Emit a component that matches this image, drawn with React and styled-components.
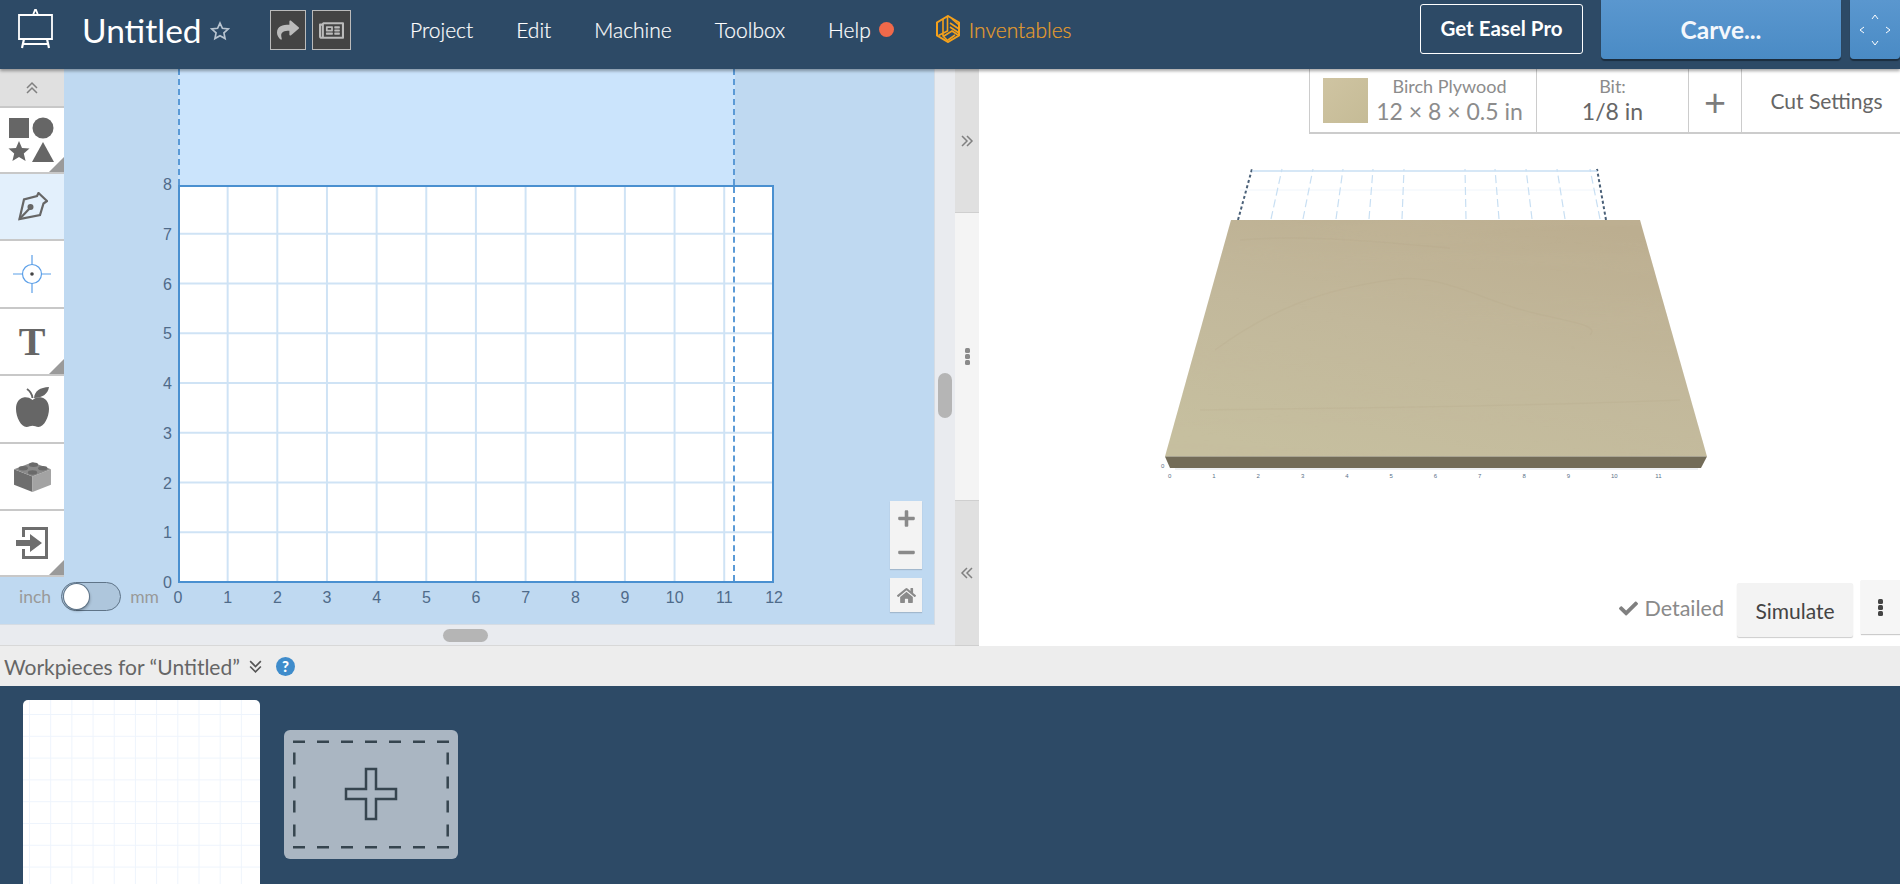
import React from 'react';
import styled, { createGlobalStyle } from 'styled-components';
import { FaShare, FaRegNewspaper, FaHome, FaCheck, FaPlus, FaMinus } from 'react-icons/fa';

const GlobalStyle = createGlobalStyle`
  html, body {
    margin: 0;
    padding: 0;
    height: 100%;
    overflow: hidden;
    background: #2d4a66;
    font-family: Lato, "Open Sans", sans-serif;
  }
  * { box-sizing: border-box; }
`;

const Page = styled.div`
  width: 1900px;
  height: 884px;
  display: flex;
  flex-direction: column;
  overflow: hidden;
`;

/* ---------- header ---------- */
const Header = styled.header`
  position: relative;
  z-index: 5;
  height: 69px;
  flex: none;
  display: flex;
  align-items: flex-start;
  background: #2d4a66;
  box-shadow: 0 2px 3px rgba(0, 0, 0, 0.35);
  color: #fff;
`;

const Logo = styled.div`
  width: 82px;
  height: 60px;
  padding: 8px 0 0 18px;
`;

const Title = styled.div`
  font-size: 33.5px;
  line-height: 60px;
  width: 128px;
  color: #fff;
`;

const Star = styled.div`
  width: 60px;
  padding: 21px 0 0 0;
`;

const ActionGroup = styled.div`
  display: flex;
  gap: 6px;
  padding-top: 10px;
  width: 140px;
`;

const SquareButton = styled.div`
  width: ${(props) => props.$width}px;
  height: 40px;
  background: #444;
  border: 1px solid #bbb;
  color: #bbb;
  display: flex;
  align-items: center;
  justify-content: center;
  font-size: ${(props) => props.$size}px;
`;

const Nav = styled.nav`
  display: flex;
  align-items: center;
  height: 58px;
  width: 1010px;
`;

const NavItem = styled.div`
  font-size: 21px;
  font-weight: 300;
  color: #fff;
  margin-right: ${(props) => props.$gap}px;
  -webkit-text-stroke: 0.2px #fff;
`;

const Dot = styled.span`
  width: 15px;
  height: 15px;
  border-radius: 50%;
  background: #f0694a;
  margin: 0 41px 0 -34px;
`;

const BrandText = styled.span`
  font-size: 21px;
  font-weight: 300;
  color: #e89f2c;
  margin-left: 8px;
  -webkit-text-stroke: 0.2px #e89f2c;
`;

const ProButton = styled.div`
  width: 163px;
  height: 50px;
  margin-top: 4px;
  border: 1px solid #fff;
  border-radius: 3px;
  display: flex;
  align-items: center;
  justify-content: center;
  font-size: 20.5px;
  font-weight: 700;
  padding-bottom: 2px;
`;

const BlueButton = styled.div`
  width: ${(props) => props.$width}px;
  margin-left: ${(props) => props.$left}px;
  height: 59px;
  flex: none;
  background: linear-gradient(#5a97cf, #4a8bc5);
  border-radius: 0 0 4px 4px;
  box-shadow: 0 2px 1px rgba(0, 0, 0, 0.4);
  display: flex;
  align-items: center;
  justify-content: center;
  font-size: 24.5px;
  font-weight: 700;
  color: #f4f8fc;
`;

/* ---------- workspace ---------- */
const Workspace = styled.div`
  height: 577px;
  flex: none;
  display: flex;
  background: #fff;
`;

const CanvasColumn = styled.div`
  position: relative;
  width: 955px;
  flex: none;
  background: #e9ebef;
  border-bottom: 1px solid #d8d8d8;
`;

const Viewport = styled.div`
  width: 935px;
  height: 556px;
  display: flex;
  background: #bfd9f1;
  border-right: 1px solid #d5dce4;
  border-bottom: 1px solid #d5dce4;
`;

const ScrollHandle = styled.div`
  position: absolute;
  background: #b5b5b5;
  border-radius: 8px;
  left: ${(props) => props.$left}px;
  top: ${(props) => props.$top}px;
  width: ${(props) => props.$w}px;
  height: ${(props) => props.$h}px;
`;

const ToolRail = styled.div`
  position: relative;
  width: 64px;
  flex: none;
`;

const Collapse = styled.div`
  height: 37px;
  background: #e0e0e0;
  display: flex;
  align-items: center;
  justify-content: center;
`;

const Tool = styled.div`
  position: relative;
  height: ${(props) => props.$h}px;
  background: ${(props) => (props.$active ? '#e3f0fc' : '#fff')};
  border-top: 2px solid #c8c8c8;
  display: flex;
  align-items: center;
  justify-content: center;
  color: #666;
  ${(props) =>
    props.$more &&
    `&::after {
      content: '';
      position: absolute;
      right: 0;
      bottom: 0;
      border-style: solid;
      border-width: 0 0 15px 15px;
      border-color: transparent transparent #9a9a9a transparent;
    }`}
`;

const ToolEnd = styled.div`
  height: 2px;
  background: #c8c8c8;
`;

const SerifT = styled.span`
  font-family: "Liberation Serif", serif;
  font-weight: 700;
  font-size: 40px;
  line-height: 1;
`;

const UnitToggle = styled.div`
  position: absolute;
  left: 19px;
  top: 513px;
  width: 140px;
  display: flex;
  align-items: center;
  justify-content: space-between;
  color: #999;
  font-size: 17.5px;
`;

const Switch = styled.div`
  position: relative;
  width: 60px;
  height: 29px;
  border-radius: 15px;
  background: #aec6dc;
  border: 1px solid #5f7488;
`;

const Knob = styled.div`
  position: absolute;
  left: 2px;
  top: 1px;
  width: 25px;
  height: 25px;
  border-radius: 50%;
  background: #fff;
  box-shadow: 0 0 0 1px #5f7488, 1px 2px 3px rgba(0, 0, 0, 0.3);
`;

const BoardArea = styled.div`
  position: relative;
  flex: 1;
  padding-left: 114px;
`;

const LightZone = styled.div`
  width: 557px;
  height: 116px;
  background: #cbe4fc;
  border-left: 2px dashed #5b9ad6;
  border-right: 2px dashed #5b9ad6;
`;

const Board = styled.div`
  position: relative;
  width: 596px;
  height: 398px;
  background-color: #fff;
  background-image:
    linear-gradient(to right, #cfe3f5 2px, transparent 2px),
    linear-gradient(to top, #cfe3f5 2px, transparent 2px);
  background-size: calc(596px / 12) calc(398px / 8);
  background-position: -3px -2px;
  background-origin: padding-box;
  border: 2px solid #4a90d0;
`;

const StockEdge = styled.div`
  position: absolute;
  left: 553px;
  top: 0;
  bottom: 0;
  border-left: 2px dashed #5b9ad6;
`;

const AxisLabel = styled.span`
  position: absolute;
  font-family: "Liberation Sans", Arial, sans-serif;
  font-size: 16px;
  line-height: 18px;
  color: #4f6b8a;
`;

const YLabel = styled(AxisLabel)`
  right: calc(100% + 8px);
  bottom: ${(props) => props.$n * 49.75 - 11}px;
`;

const XLabel = styled(AxisLabel)`
  top: calc(100% + 8px);
  left: ${(props) => props.$n * 49.67 - 2}px;
  transform: translateX(-50%);
`;

const ZoomStack = styled.div`
  position: absolute;
  left: 826px;
  top: 432px;
  width: 32px;
  display: flex;
  flex-direction: column;
  gap: 9px;
`;

const ZoomCard = styled.div`
  background: #f3f3f3;
  box-shadow: 0 1px 1px rgba(0, 0, 0, 0.15);
  color: #8a8a8a;
  display: flex;
  flex-direction: column;
  align-items: center;
  justify-content: space-around;
  height: ${(props) => props.$h}px;
  font-size: ${(props) => props.$size}px;
`;

const Divider = styled.div`
  width: 24px;
  flex: none;
  display: flex;
  flex-direction: column;
`;

const DividerPart = styled.div`
  height: ${(props) => props.$h}px;
  background: ${(props) => (props.$light ? '#f4f4f4' : '#e0e0e0')};
  border-bottom: 1px solid #cfcfcf;
  display: flex;
  align-items: ${(props) => props.$align};
  justify-content: center;
  padding: ${(props) => props.$pad || 0};
`;

const DotsV = styled.div`
  display: flex;
  flex-direction: column;
  gap: 1px;
  span {
    width: 5px;
    height: 5px;
    border-radius: 1.5px;
    background: ${(props) => props.$color};
  }
`;

/* ---------- 3d preview ---------- */
const Preview = styled.div`
  flex: 1;
  display: flex;
  flex-direction: column;
  background: #fff;
`;

const MaterialBar = styled.div`
  align-self: flex-end;
  width: 591px;
  height: 65px;
  display: flex;
  border-left: 1px solid #ccc;
  border-bottom: 2px solid #ccc;
  background: #fff;
`;

const BarCell = styled.div`
  width: ${(props) => props.$w}px;
  flex: none;
  display: flex;
  align-items: center;
  justify-content: center;
  padding-left: ${(props) => props.$pad || 0}px;
  border-right: ${(props) => (props.$last ? 'none' : '1px solid #ccc')};
`;

const Swatch = styled.div`
  width: 45px;
  height: 45px;
  margin: 0 8px 0 0;
  background: linear-gradient(135deg, #cfc4a2, #c5bb96);
`;

const Stacked = styled.div`
  text-align: center;
  color: #888;
`;

const SmallLine = styled.div`
  font-size: 18px;
  line-height: 21px;
  color: #8c8c8c;
`;

const BigLine = styled.div`
  font-size: 23px;
  line-height: 29px;
  color: ${(props) => (props.$dark ? '#666' : '#8c8c8c')};
`;

const PlusMark = styled.span`
  font-size: 38px;
  line-height: 1;
  color: #7c7c7c;
`;

const CutLabel = styled.span`
  font-size: 21px;
  color: #666;
`;

const Stage = styled.div`
  height: 446px;
  flex: none;
`;

const PreviewFooter = styled.div`
  height: 66px;
  flex: none;
  display: flex;
  justify-content: flex-end;
  align-items: flex-start;
`;

const Status = styled.div`
  display: flex;
  align-items: center;
  gap: 7px;
  height: 56px;
  margin-right: 13px;
  color: #8a8a8a;
  font-size: 21.5px;
  svg { color: #808080; font-size: 19px; }
`;

const Simulate = styled.div`
  width: 116px;
  height: 54px;
  margin-top: 3px;
  background: #f3f3f3;
  border-radius: 2px;
  box-shadow: 0 1px 1px rgba(0, 0, 0, 0.2);
  display: flex;
  align-items: center;
  justify-content: center;
  font-size: 21px;
  color: #444;
`;

const MoreButton = styled.div`
  width: 39px;
  height: 54px;
  margin-left: 8px;
  background: #f6f6f6;
  box-shadow: 0 1px 1px rgba(0, 0, 0, 0.2);
  display: flex;
  align-items: center;
  justify-content: center;
`;

/* ---------- workpieces ---------- */
const WorkBar = styled.div`
  height: 40px;
  flex: none;
  background: #ededed;
  display: flex;
  align-items: center;
  gap: 8px;
  padding-left: 4px;
  font-size: 21px;
  color: #666;
`;

const Help = styled.span`
  width: 19px;
  height: 19px;
  border-radius: 50%;
  background: #3f8ccb;
  color: #fff;
  font-size: 15px;
  font-weight: 900;
  display: flex;
  align-items: center;
  justify-content: center;
  margin-left: 5px;
`;

const Tray = styled.div`
  flex: 1;
  background: #2d4a66;
  display: flex;
  align-items: flex-start;
  gap: 24px;
  padding: 14px 0 0 23px;
`;

const PieceCard = styled.div`
  width: 237px;
  height: 200px;
  background-color: #fff;
  background-image:
    linear-gradient(to right, #eef4fc 1px, transparent 1px),
    linear-gradient(to bottom, #eef4fc 1px, transparent 1px);
  background-size: 21.2px 21.8px;
  background-position: 6px 14px;
  border-radius: 5px 5px 0 0;
`;

const AddCard = styled.div`
  width: 174px;
  height: 129px;
  margin-top: 30px;
  background: #aab6c2;
  border-radius: 6px;
  display: flex;
`;

const Chevrons = ({ dir, color = '#808080', size = 14 }) => {
  const rotate = { up: 0, down: 180, right: 90, left: -90 }[dir];
  return (
    <svg width={size} height={size} viewBox="0 0 14 14" fill="none" stroke={color} strokeWidth="1.5" style={{ transform: `rotate(${rotate}deg)` }}>
      <path d="M2 7l5-5 5 5M2 12l5-5 5 5" />
    </svg>
  );
};

const EaselIcon = () => (
  <svg width="36" height="42" viewBox="0 0 36 42" fill="none" stroke="#fff" strokeWidth="1.8">
    <path d="M1 7h33v24H1z" />
    <path d="M15 7l2-5h1l2 5" />
    <path d="M6 31l-2 9M29 31l2 9M5 36h25" strokeWidth="2.2" />
  </svg>
);

const StarIcon = () => (
  <svg width="20" height="20" viewBox="0 0 24 24" fill="none" stroke="#b8c4d0" strokeWidth="2">
    <path d="M12 2.5l2.9 6.3 6.9.8-5.1 4.7 1.4 6.8-6.1-3.4-6.1 3.4 1.4-6.8-5.1-4.7 6.9-.8z" />
  </svg>
);

const BrandIcon = () => (
  <svg width="26" height="28" viewBox="0 0 26 28" fill="none" stroke="#f5a11b" strokeWidth="2">
    <path d="M13 1l11 6.500v13L13 27 2 20.500v-13z" />
    <path d="M8 4v17l5 5M12.500 2v14l-9 4.500M17 4l7 6M15 8l9 6M15 12l9 6M9 21l8-5 6 4M13 25l7-5" strokeWidth="1.6" />
  </svg>
);

const ShapesIcon = () => (
  <svg width="46" height="46" viewBox="0 0 46 46" fill="#666" style={{ marginLeft: -3 }}>
    <rect x="1" y="1" width="20" height="20" />
    <circle cx="35" cy="11" r="10.500" />
    <path d="M11 24l3 7 7.500.6-5.700 5 1.800 7.400L11 40l-6.600 4 1.800-7.400-5.700-5L8 31z" />
    <path d="M35 25l11 20H24z" />
  </svg>
);

const PenIcon = () => (
  <svg width="30" height="29" viewBox="0 0 30 29" fill="none" stroke="#666" strokeWidth="2.200" style={{ marginLeft: 2 }}>
    <path d="M1.500 27L6 7.500l13-3.500 1.500-3L29 9l-3.500 2.500L22 23z" />
    <path d="M1.500 27L12 16" />
    <circle cx="12.500" cy="15" r="3" fill="#666" stroke="none" />
  </svg>
);

const OriginIcon = () => (
  <svg width="38" height="38" viewBox="0 0 38 38" fill="none" stroke="#5b9fe8" strokeWidth="1.200">
    <circle cx="19" cy="19" r="9.500" />
    <path d="M19 0v9.500M19 28.500V38M0 19h9.500M28.500 19H38" />
    <circle cx="19" cy="19" r="1.800" fill="#444" stroke="none" />
  </svg>
);

const AppleIcon = () => (
  <svg width="33" height="40" viewBox="0 0 33 40" fill="#666" style={{ marginTop: -4 }}>
    <path d="M16.500 13c-3-2.500-6-3-9-2.500C2.500 11.500 0 16 0 22c0 8 5 18 10.500 18 2.500 0 4-1.200 6-1.200s3.500 1.200 6 1.200C28 40 33 30 33 22c0-6-2.500-10.500-7.500-11.500-3-.5-6 0-9 2.500z" />
    <path d="M18 11C18.500 4 24 .5 33 0c-1 7-7 11-15 11z" />
    <path d="M11 2c3 2 5 5 5.500 9" fill="none" stroke="#666" strokeWidth="2" />
  </svg>
);

const BrickIcon = () => (
  <svg width="39" height="31" viewBox="0 0 38 30">
    <path d="M1 8l18 7v15L1 23z" fill="#6e6e6e" />
    <path d="M19 15l18-7v15l-18 7z" fill="#a3a3a3" />
    <path d="M1 8l18-7 18 7-18 7z" fill="#8a8a8a" />
    <g fill="#6a6a6a">
      <ellipse cx="10" cy="7" rx="4.500" ry="2.200" />
      <ellipse cx="20" cy="3.500" rx="4.500" ry="2.200" />
      <ellipse cx="29" cy="7" rx="4.500" ry="2.200" />
      <ellipse cx="19" cy="11" rx="4.500" ry="2.200" />
    </g>
  </svg>
);

const ImportIcon = () => (
  <svg width="32" height="34" viewBox="0 0 32 34" fill="#6e6e6e">
    <path d="M6 1h26v32H6v-10h3v7h20V4H9v7H6z" />
    <path d="M0 14h14V8l12 9-12 9v-6H0z" />
  </svg>
);

const AddSketchIcon = () => (
  <svg width="174" height="129" viewBox="0 0 174 129" fill="none" stroke="#36454f">
    <g strokeWidth="2.500" strokeDasharray="12 12">
      <path d="M9 11.700H165M9 117.300H165" />
      <path d="M10.300 22.600V107M163.700 22.600V107" />
    </g>
    <path d="M82 39h10v20h20v10H92v20H82V69H62V59h20z" strokeWidth="2.500" />
  </svg>
);

const PlywoodIcon = () => (
  <svg width="921" height="446" viewBox="979 134 921 446">
    <defs>
      <linearGradient id="plyTop" x1="0.25" y1="1" x2="0.75" y2="0">
        <stop offset="0" stopColor="#c6bf9f" />
        <stop offset="0.5" stopColor="#c2b89b" />
        <stop offset="1" stopColor="#bcae90" />
      </linearGradient>
      <filter id="grain" x="0" y="0" width="100%" height="100%">
        <feTurbulence type="fractalNoise" baseFrequency="0.003 0.04" numOctaves="3" seed="6" />
        <feColorMatrix values="0 0 0 0 0.55  0 0 0 0 0.48  0 0 0 0 0.33  0.55 0 0 0 -0.22" />
        <feComposite in2="SourceAlpha" operator="in" />
      </filter>
    </defs>
    <path d="M1238 220L1252 169M1606 220L1597 169" stroke="#4a6078" strokeWidth="2" strokeDasharray="3 2.500" />
    <path d="M1252 171H1597" stroke="#c8dff3" strokeWidth="1.500" />
    <path d="M1240 190H1600" stroke="#f0f5fb" strokeWidth="1" />
    <g stroke="#c8dff3" strokeWidth="1.200" strokeDasharray="8 4">
      <path d="M1271 219L1282 169M1303 219L1313 169M1336 219L1343 169M1369 219L1373 169M1402 219L1404 169" />
      <path d="M1466 219L1465 169M1499 219L1495 169M1532 219L1526 169M1565 219L1557 169M1600 219L1590 169" />
    </g>
    <path d="M1231 220H1640L1707 456.500H1165Z" fill="url(#plyTop)" />
    <path d="M1231 220H1640L1707 456.500H1165Z" filter="url(#grain)" />
    <g fill="none" stroke="#b4a687" strokeWidth="1.500" opacity="0.2">
      <path d="M1215 350C1270 310 1320 290 1390 280C1440 272 1480 300 1530 312C1570 322 1600 325 1590 335" />
      <path d="M1200 410C1320 408 1480 408 1680 400" />
      <path d="M1240 240C1300 235 1360 240 1450 248" />
    </g>
    <path d="M1165 456.500H1707L1701 468H1170Z" fill="#736c58" />
    <path d="M1175 469H1698" stroke="#dfe3e8" strokeWidth="1" />
    <g fontFamily="Liberation Sans, sans-serif" fontSize="6" fill="#5a7088">
      <text x="1161" y="468">0</text>
      {[0, 1, 2, 3, 4, 5, 6, 7, 8, 9, 10, 11].map((n) => (
        <text key={n} x={1168 + n * 44.3} y="478">{n}</text>
      ))}
    </g>
  </svg>
);

const Y_TICKS = [0, 1, 2, 3, 4, 5, 6, 7, 8];
const X_TICKS = [0, 1, 2, 3, 4, 5, 6, 7, 8, 9, 10, 11, 12];

export default function App() {
  return (
    <Page>
      <GlobalStyle />
      <Header>
        <Logo><EaselIcon /></Logo>
        <Title>Untitled</Title>
        <Star><StarIcon /></Star>
        <ActionGroup>
          <SquareButton $width={36} $size={22}><FaShare /></SquareButton>
          <SquareButton $width={39} $size={25}><FaRegNewspaper /></SquareButton>
        </ActionGroup>
        <Nav>
          <NavItem $gap={43}>Project</NavItem>
          <NavItem $gap={43}>Edit</NavItem>
          <NavItem $gap={43}>Machine</NavItem>
          <NavItem $gap={43}>Toolbox</NavItem>
          <NavItem $gap={42}>Help</NavItem>
          <Dot />
          <BrandIcon />
          <BrandText>Inventables</BrandText>
        </Nav>
        <ProButton>Get Easel Pro</ProButton>
        <BlueButton $width={240} $left={18}>Carve...</BlueButton>
        <BlueButton $width={50} $left={9}>
          <svg width="32" height="34" viewBox="0 0 32 34" fill="none" stroke="#fff" strokeWidth="1">
            <path d="M13 6l3-4 3 4M13 28l3 4 3-4M5 14l-4 3 4 3M27 14l4 3-4 3" />
          </svg>
        </BlueButton>
      </Header>

      <Workspace>
        <CanvasColumn>
          <Viewport>
            <ToolRail>
              <Collapse><Chevrons dir="up" /></Collapse>
              <Tool $h={66} $more><ShapesIcon /></Tool>
              <Tool $h={67} $active><PenIcon /></Tool>
              <Tool $h={68}><OriginIcon /></Tool>
              <Tool $h={67} $more><SerifT>T</SerifT></Tool>
              <Tool $h={68}><AppleIcon /></Tool>
              <Tool $h={67}><BrickIcon /></Tool>
              <Tool $h={66} $more><ImportIcon /></Tool>
              <ToolEnd />
              <UnitToggle>
                <span>inch</span>
                <Switch><Knob /></Switch>
                <span>mm</span>
              </UnitToggle>
            </ToolRail>
            <BoardArea>
              <LightZone />
              <Board>
                <StockEdge />
                {Y_TICKS.map((n) => <YLabel key={n} $n={n}>{n}</YLabel>)}
                {X_TICKS.map((n) => <XLabel key={n} $n={n}>{n}</XLabel>)}
              </Board>
              <ZoomStack>
                <ZoomCard $h={68} $size={19}><FaPlus /><FaMinus /></ZoomCard>
                <ZoomCard $h={34} $size={19}><FaHome /></ZoomCard>
              </ZoomStack>
            </BoardArea>
          </Viewport>
          <ScrollHandle $left={938} $top={304} $w={14} $h={45} />
          <ScrollHandle $left={443} $top={560} $w={45} $h={13} />
        </CanvasColumn>

        <Divider>
          <DividerPart $h={144} $align="flex-start" $pad="65px 0 0"><Chevrons dir="right" /></DividerPart>
          <DividerPart $h={288} $light $align="center">
            <DotsV $color="#8a8a8a"><span /><span /><span /></DotsV>
          </DividerPart>
          <DividerPart $h={145} $align="center"><Chevrons dir="left" /></DividerPart>
        </Divider>

        <Preview>
          <MaterialBar>
            <BarCell $w={227}>
              <Swatch />
              <Stacked>
                <SmallLine>Birch Plywood</SmallLine>
                <BigLine>12 × 8 × 0.5 in</BigLine>
              </Stacked>
            </BarCell>
            <BarCell $w={152}>
              <Stacked>
                <SmallLine>Bit:</SmallLine>
                <BigLine $dark>1/8 in</BigLine>
              </Stacked>
            </BarCell>
            <BarCell $w={53}><PlusMark>+</PlusMark></BarCell>
            <BarCell $w={159} $last $pad={10}><CutLabel>Cut Settings</CutLabel></BarCell>
          </MaterialBar>
          <Stage><PlywoodIcon /></Stage>
          <PreviewFooter>
            <Status><FaCheck />Detailed</Status>
            <Simulate>Simulate</Simulate>
            <MoreButton>
              <DotsV $color="#444"><span /><span /><span /></DotsV>
            </MoreButton>
          </PreviewFooter>
        </Preview>
      </Workspace>

      <WorkBar>
        Workpieces for “Untitled”
        <Chevrons dir="down" color="#555" size={15} />
        <Help>?</Help>
      </WorkBar>
      <Tray>
        <PieceCard />
        <AddCard><AddSketchIcon /></AddCard>
      </Tray>
    </Page>
  );
}
